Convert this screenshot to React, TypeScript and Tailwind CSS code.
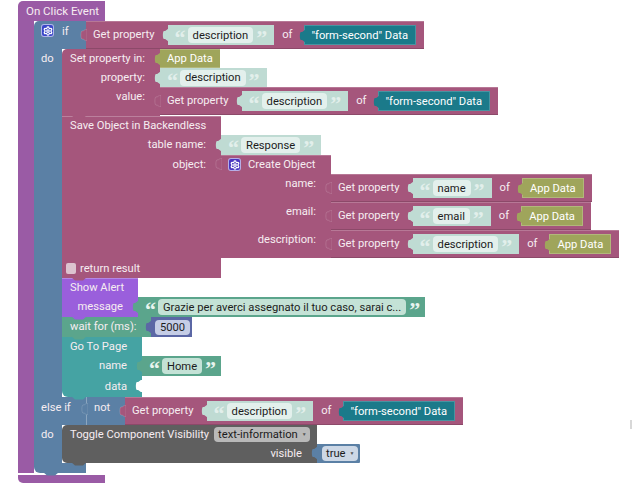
import { Settings } from "lucide-react";

const MAROON = "#a5567c";
const BLUE = "#5b80a5";
const OLIVE = "#9fa55b";
const TEAL = "#1b7a8a";
const STR = "#bfdbd3";
const GREEN = "#5ba58c";

const Tab = ({ color, className = "top-[4px]", line = false }: { color: string; className?: string; line?: boolean }) => (
  <svg className={`absolute -left-[6px] z-10 ${className}`} width="7" height="12" viewBox="0 0 7 12">
    <path
      d="M7 0V12C4 12 5 10 2 10C.5 10 .5 2 2 2C5 2 4 0 7 0Z"
      fill={color}
      stroke={line ? "rgba(255,255,255,.25)" : "none"}
      strokeWidth=".6"
    />
  </svg>
);

const Notch = ({ color }: { color: string }) => (
  <svg className="absolute left-[9px] -bottom-[3px] z-20" width="16" height="4" viewBox="0 0 16 4">
    <path d="M0 0L4 3.500H12L16 0Z" fill={color} />
  </svg>
);

const Cog = ({ bg }: { bg: string }) => (
  <span className={`flex h-[13px] w-[13px] items-center justify-center rounded-[3px] border border-white/60 ${bg}`}>
    <Settings size={10} strokeWidth={3} color="#fff" />
  </span>
);

const Quote = ({ open, color }: { open?: boolean; color: string }) => (
  <span
    className="h-[16px] w-[9px] translate-y-[3px] text-[22px] font-bold leading-[16px]"
    style={{ color, fontFamily: "Liberation Serif, serif" }}
  >
    {open ? "\u201C" : "\u201D"}
  </span>
);

const Str = ({ text, green, className = "h-[20px]" }: { text: string; green?: boolean; className?: string }) => (
  <div
    className={`relative flex w-fit items-center pl-[7px] ${green ? "pr-[7px]" : "pr-[9px]"} ${className}`}
    style={{ background: green ? GREEN : STR }}
  >
    <Tab color={green ? GREEN : STR} />
    <Quote open color={green ? "#e8f4ef" : "#e2efeb"} />
    <span className={`ml-[4px] mr-[3px] flex h-[16px] items-center rounded-[4px] px-[5px] text-[#1c1c1c] ${green ? "bg-[#c4e2d6]" : "bg-[#e3f0ec]"}`}>
      {text}
    </span>
    <Quote color={green ? "#e8f4ef" : "#e2efeb"} />
  </div>
);

const Var = ({ text, color, wide }: { text: string; color: string; wide?: boolean }) => (
  <div className={`relative flex h-[20px] items-center border border-white/20 text-white ${wide ? "pl-[6px] pr-[7px]" : "px-[7px]"}`} style={{ background: color }}>
    <Tab color={color} />
    {text}
  </div>
);

const GetProperty = ({ name, of }: { name: string; of: "form" | "app" }) => (
  <div className="relative flex h-[28px] w-fit items-center border-y border-t-white/20 border-b-black/15 bg-[#a5567c] pl-[7px] pr-[8px]">
    <Tab color={MAROON} className="top-[7px]" line />
    <span className="mb-[2px] mr-[13px]">Get property</span>
    <Str text={name} />
    <span className="mb-[2px] ml-[8px] mr-[12px]">of</span>
    {of === "form" ? <Var wide text={'"form-second" Data'} color={TEAL} /> : <Var text="App Data" color={OLIVE} />}
  </div>
);

const Label = ({ text, className }: { text: string; className: string }) => (
  <div className={`shrink-0 pr-[15px] text-right ${className}`}>{text}</div>
);

const CreateRow = ({ label, name }: { label: string; name: string }) => (
  <div className="flex">
    <Label text={label} className="h-[28px] w-[110px] bg-[#a5567c]" />
    <GetProperty name={name} of="app" />
  </div>
);

export default function App() {
  return (
    <div
      className="relative min-h-screen overflow-hidden bg-white pl-[18px] pt-[1px] text-[11.2px] leading-[19px] text-[#f6edf1]"
      style={{ fontFamily: "Roboto, sans-serif" }}
    >
      {/* On Click Event */}
      <div className="flex h-[20px] w-[87px] items-center rounded-tl-[5px] bg-[#9a5ba5] pl-[8px] text-[11.5px]">On Click Event</div>
      <div className="flex">
        <div className="w-[16px] shrink-0 bg-[#9a5ba5]" />
        <div className="flex flex-col">
          {/* if */}
          <div className="flex">
            <div className="flex h-[28px] w-[52px] gap-[8px] rounded-tl-[5px] bg-[#5b80a5] pl-[7px] pt-[3px]">
              <Cog bg="bg-[#3a46c8]" />
              <span className="leading-[15px]">if</span>
            </div>
            <GetProperty name="description" of="form" />
          </div>

          {/* do */}
          <div className="flex">
            <div className="w-[28px] shrink-0 bg-[#5b80a5] pl-[7px]">do</div>
            <div className="flex flex-col">
              {/* Set property */}
              <div className="relative w-fit">
                <div className="flex">
                  <Label text="Set property in:" className="h-[19px] w-[98px] rounded-tl-[5px] bg-[#a5567c]" />
                  <div className="relative flex h-[19px] items-center border-y border-white/20 bg-[#9fa55b] px-[7px] text-white">
                    <Tab color={OLIVE} className="top-[3px]" />
                    App Data
                  </div>
                </div>
                <div className="flex">
                  <Label text="property:" className="h-[19px] w-[98px] bg-[#a5567c]" />
                  <Str text="description" className="h-[19px]" />
                </div>
                <div className="flex">
                  <Label text="value:" className="h-[29px] w-[98px] bg-[#a5567c]" />
                  <GetProperty name="description" of="form" />
                </div>
                <Notch color={MAROON} />
              </div>

              {/* Save Object */}
              <div className="relative w-fit">
                <div className="h-[19px] w-[159px] bg-[#a5567c] pl-[8px] shadow-[inset_0_1px_0_rgba(255,255,255,.25)]">Save Object in Backendless</div>
                <div className="flex">
                  <Label text="table name:" className="h-[20px] w-[159px] bg-[#a5567c] leading-[20px]" />
                  <Str text="Response" />
                </div>
                <div className="flex">
                  <Label text="object:" className="w-[159px] bg-[#a5567c]" />
                  <div className="relative">
                    <Tab color={MAROON} className="top-[3px]" line />
                    <div className="flex h-[19px] w-[110px] items-center gap-[7px] bg-[#a5567c] pl-[7px] shadow-[inset_0_1px_0_rgba(255,255,255,.2)]">
                      <Cog bg="bg-[#4a35c0]" />
                      <span>Create Object</span>
                    </div>
                    <CreateRow label="name:" name="name" />
                    <CreateRow label="email:" name="email" />
                    <CreateRow label="description:" name="description" />
                  </div>
                </div>
                <div className="flex h-[20px] w-[159px] items-center gap-[4px] bg-[#a5567c] pl-[4px]">
                  <span className="h-[11px] w-[10px] rounded-[2px] bg-[#dcc3cf]" />
                  <span>return result</span>
                </div>
                <Notch color={MAROON} />
              </div>

              {/* Show Alert */}
              <div className="relative w-fit">
                <div className="h-[19px] w-[76px] bg-[#9a5fdc] pl-[8px] shadow-[inset_0_1px_0_rgba(255,255,255,.25)]">Show Alert</div>
                <div className="flex">
                  <Label text="message" className="h-[20px] w-[76px] bg-[#9a5fdc] leading-[20px]" />
                  <Str green text="Grazie per averci assegnato il tuo caso, sarai c..." />
                </div>
                <Notch color="#9a5fdc" />
              </div>

              {/* wait for */}
              <div className="relative flex w-fit">
                <div className="h-[20px] w-[83px] bg-[#5ba58c] pl-[8px] leading-[20px]">wait for (ms):</div>
                <div className="relative ml-[6px] flex h-[20px] w-[41px] items-center bg-[#5b67a5] pl-[4px]">
                  <Tab color="#5b67a5" />
                  <span className="flex h-[15px] items-center rounded-[4px] bg-[#c5cde6] px-[5px] text-[#1c1c1c]">5000</span>
                </div>
                <div className="absolute left-[83px] top-0 h-[20px] w-[6px] bg-[#5ba58c]" />
                <Notch color={GREEN} />
              </div>

              {/* Go To Page */}
              <div className="relative w-fit">
                <div className="h-[19px] w-[80px] bg-[#45a3a3] pl-[8px] leading-[20px]">Go To Page</div>
                <div className="flex">
                  <Label text="name" className="h-[20px] w-[80px] bg-[#45a3a3] leading-[20px]" />
                  <Str green text="Home" />
                </div>
                <div className="relative h-[21px] w-[80px] rounded-bl-[6px] bg-[#45a3a3]">
                  <div className="pr-[15px] text-right leading-[21px]">data</div>
                  <svg className="absolute right-0 top-[4px]" width="7" height="12" viewBox="0 0 7 12">
                    <path d="M7 0V12C4 12 5 10 2 10C.5 10 .5 2 2 2C5 2 4 0 7 0Z" fill="#fff" />
                  </svg>
                </div>
                <Notch color="#45a3a3" />
              </div>
            </div>
          </div>

          {/* else if */}
          <div className="flex">
            <div className="h-[28px] w-[52px] bg-[#5b80a5] pl-[7px] pt-[1px]">else if</div>
            <div className="relative h-[28px] w-[39px] border-l border-white/30 bg-[#5b80a5] pl-[7px] pt-[1px]">
              <Tab color={BLUE} className="top-[6px]" line />
              not
            </div>
            <GetProperty name="description" of="form" />
          </div>

          {/* do toggle */}
          <div className="flex">
            <div className="w-[28px] shrink-0 bg-[#5b80a5] pl-[7px]">do</div>
            <div className="relative w-fit">
              <div className="flex h-[19px] w-[255px] items-center gap-[5px] rounded-tl-[5px] bg-[#5f5f5f] pl-[8px]">
                <span>Toggle Component Visibility</span>
                <span className="flex h-[15px] items-center gap-[4px] rounded-[4px] bg-[#b9b9b9] pl-[4px] pr-[3px] text-[#1c1c1c]">
                  text-information
                  <span className="text-[5px] leading-none text-[#555]">▼</span>
                </span>
              </div>
              <div className="flex">
                <Label text="visible" className="h-[19px] w-[255px] rounded-bl-[5px] bg-[#5f5f5f]" />
                <div className="relative flex h-[19px] w-[43px] items-center rounded-r-[1px] bg-[#5b80a5] pl-[5px]">
                  <Tab color={BLUE} className="top-[3px]" />
                  <span className="flex h-[15px] items-center gap-[4px] rounded-[4px] bg-[#cdd8e6] pl-[4px] pr-[3px] text-[#1c1c1c]">
                    true
                    <span className="text-[5px] leading-none text-[#555]">▼</span>
                  </span>
                </div>
              </div>
              <Notch color="#5f5f5f" />
            </div>
          </div>

          <div className="relative h-[10px] w-[52px] rounded-bl-[6px] bg-[#5b80a5]">
            <Notch color={BLUE} />
          </div>
        </div>
      </div>
      <div className="mt-[2px] h-[8px] w-[87px] rounded-bl-[5px] bg-[#9a5ba5]" />
      <div className="absolute right-0 top-[420px] h-[9px] w-[2px] bg-[#d8d8d8]" />
    </div>
  );
}
